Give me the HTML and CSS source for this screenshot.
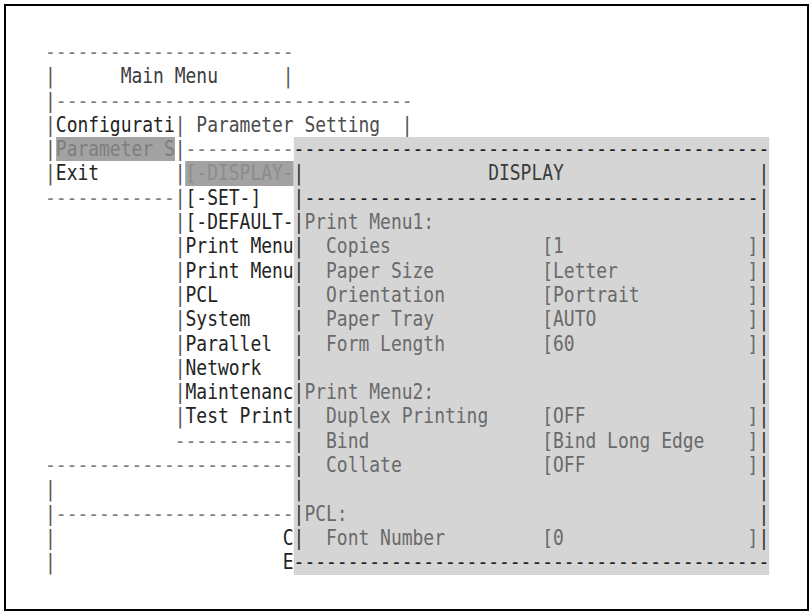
FILE: index.html
```html
<!DOCTYPE html>
<html lang="en">
<head>
<meta charset="utf-8">
<title>Parameter Setting - DISPLAY</title>
<link rel="stylesheet" href="styles.css">
</head>
<body>
<div class="screen">
  <div class="term">
    <div class="row rule">-----------------------</div>
    <div class="row"><span class="edge">|</span><span class="title">      Main Menu      </span><span class="edge">|</span></div>
    <div class="row"><span class="edge">|</span><span class="rule">---------------------------------</span></div>
    <div class="row"><span class="edge">|</span>Configurati<span class="edge">|</span><span class="subtitle"> Parameter Setting  </span><span class="edge">|</span></div>

    <div class="lower">
      <div class="under">
        <div class="row"><span class="edge">|</span><span class="hl">Parameter S</span><span class="edge">|</span><span class="rule">----------</span></div>
        <div class="row"><span class="edge">|</span>Exit       <span class="edge">|</span><span class="hl hl-sub">[-DISPLAY-</span></div>
        <div class="row"><span class="rule">------------</span><span class="edge">|</span>[-SET-]</div>
        <div class="row">            <span class="edge">|</span>[-DEFAULT-</div>
        <div class="row">            <span class="edge">|</span>Print Menu</div>
        <div class="row">            <span class="edge">|</span>Print Menu</div>
        <div class="row">            <span class="edge">|</span>PCL</div>
        <div class="row">            <span class="edge">|</span>System</div>
        <div class="row">            <span class="edge">|</span>Parallel</div>
        <div class="row">            <span class="edge">|</span>Network</div>
        <div class="row">            <span class="edge">|</span>Maintenanc</div>
        <div class="row">            <span class="edge">|</span>Test Print</div>
        <div class="row">            <span class="rule">-----------</span></div>
        <div class="row rule">-----------------------</div>
        <div class="row"><span class="edge">|</span></div>
        <div class="row"><span class="edge">|</span><span class="rule">----------------------</span></div>
        <div class="row"><span class="edge">|</span>                     C</div>
        <div class="row"><span class="edge">|</span>                     E</div>
      </div>

      <div class="panel">
        <div class="row frame">--------------------------------------------</div>
        <div class="row"><span class="bar">|</span><span class="body heading">DISPLAY</span><span class="bar">|</span></div>
        <div class="row"><span class="bar">|</span><span class="body frame">------------------------------------------</span><span class="bar">|</span></div>
        <div class="row"><span class="bar">|</span><span class="body">Print Menu1:</span><span class="bar">|</span></div>
        <div class="row"><span class="bar">|</span><span class="body"><span class="label">Copies</span>[<span class="val">1</span>]</span><span class="bar">|</span></div>
        <div class="row"><span class="bar">|</span><span class="body"><span class="label">Paper Size</span>[<span class="val">Letter</span>]</span><span class="bar">|</span></div>
        <div class="row"><span class="bar">|</span><span class="body"><span class="label">Orientation</span>[<span class="val">Portrait</span>]</span><span class="bar">|</span></div>
        <div class="row"><span class="bar">|</span><span class="body"><span class="label">Paper Tray</span>[<span class="val">AUTO</span>]</span><span class="bar">|</span></div>
        <div class="row"><span class="bar">|</span><span class="body"><span class="label">Form Length</span>[<span class="val">60</span>]</span><span class="bar">|</span></div>
        <div class="row"><span class="bar">|</span><span class="body"></span><span class="bar">|</span></div>
        <div class="row"><span class="bar">|</span><span class="body">Print Menu2:</span><span class="bar">|</span></div>
        <div class="row"><span class="bar">|</span><span class="body"><span class="label">Duplex Printing</span>[<span class="val">OFF</span>]</span><span class="bar">|</span></div>
        <div class="row"><span class="bar">|</span><span class="body"><span class="label">Bind</span>[<span class="val">Bind Long Edge</span>]</span><span class="bar">|</span></div>
        <div class="row"><span class="bar">|</span><span class="body"><span class="label">Collate</span>[<span class="val">OFF</span>]</span><span class="bar">|</span></div>
        <div class="row"><span class="bar">|</span><span class="body"></span><span class="bar">|</span></div>
        <div class="row"><span class="bar">|</span><span class="body">PCL:</span><span class="bar">|</span></div>
        <div class="row"><span class="bar">|</span><span class="body"><span class="label">Font Number</span>[<span class="val">0</span>]</span><span class="bar">|</span></div>
        <div class="row frame">--------------------------------------------</div>
      </div>
    </div>
  </div>
</div>
</body>
</html>
```

FILE: styles.css
```css
html, body {
  margin: 0;
  background: #fff;
}

/* framed text screen */
.screen {
  box-sizing: border-box;
  width: 805px;
  height: 607px;
  margin: 4px 0 0 4px;
  border: 2px solid #000;
  padding: 34px 0 0 39px;
  background: #fff;
  overflow: hidden;
}

/* character grid: 67 columns x 22 rows, narrow half-width cells */
.term {
  width: 67ch;
  font-family: "DejaVu Sans Mono", "Liberation Mono", monospace;
  font-size: 21px;
  line-height: 24.3px;
  color: #242424;
  transform: scaleX(0.855);
  transform-origin: 0 0;
}

.row {
  height: 24.3px;
  white-space: pre;
  overflow: hidden;
}

.rule { color: #808080; }
.edge { color: #505050; }
.title { color: #3c3c3c; }
.subtitle { color: #4c4c4c; }

/* selected menu entries */
.hl {
  display: inline-block;
  vertical-align: top;
  height: 24.3px;
  background: #a2a2a2;
  color: #7e7e7e;
}
.hl-sub { color: #8c8c8c; }

.lower {
  display: flex;
}

.under {
  width: 23ch;
  flex: none;
  overflow: hidden;
}

/* DISPLAY settings window */
.panel {
  width: 44ch;
  flex: none;
  background: #d5d5d5;
  color: #6a6a6a;
  overflow: hidden;
}

.panel .row {
  display: flex;
}

.panel .frame { color: #222; }

.bar {
  flex: none;
  width: 1ch;
  color: #2c2c2c;
}

.body {
  flex: none;
  width: 42ch;
  display: flex;
  overflow: hidden;
}

.heading {
  padding-left: 17ch;
  box-sizing: border-box;
  color: #3c3c3c;
}

.label {
  flex: none;
  width: 22ch;
  padding-left: 2ch;
  box-sizing: border-box;
}

.val {
  flex: none;
  width: 18ch;
}
```
